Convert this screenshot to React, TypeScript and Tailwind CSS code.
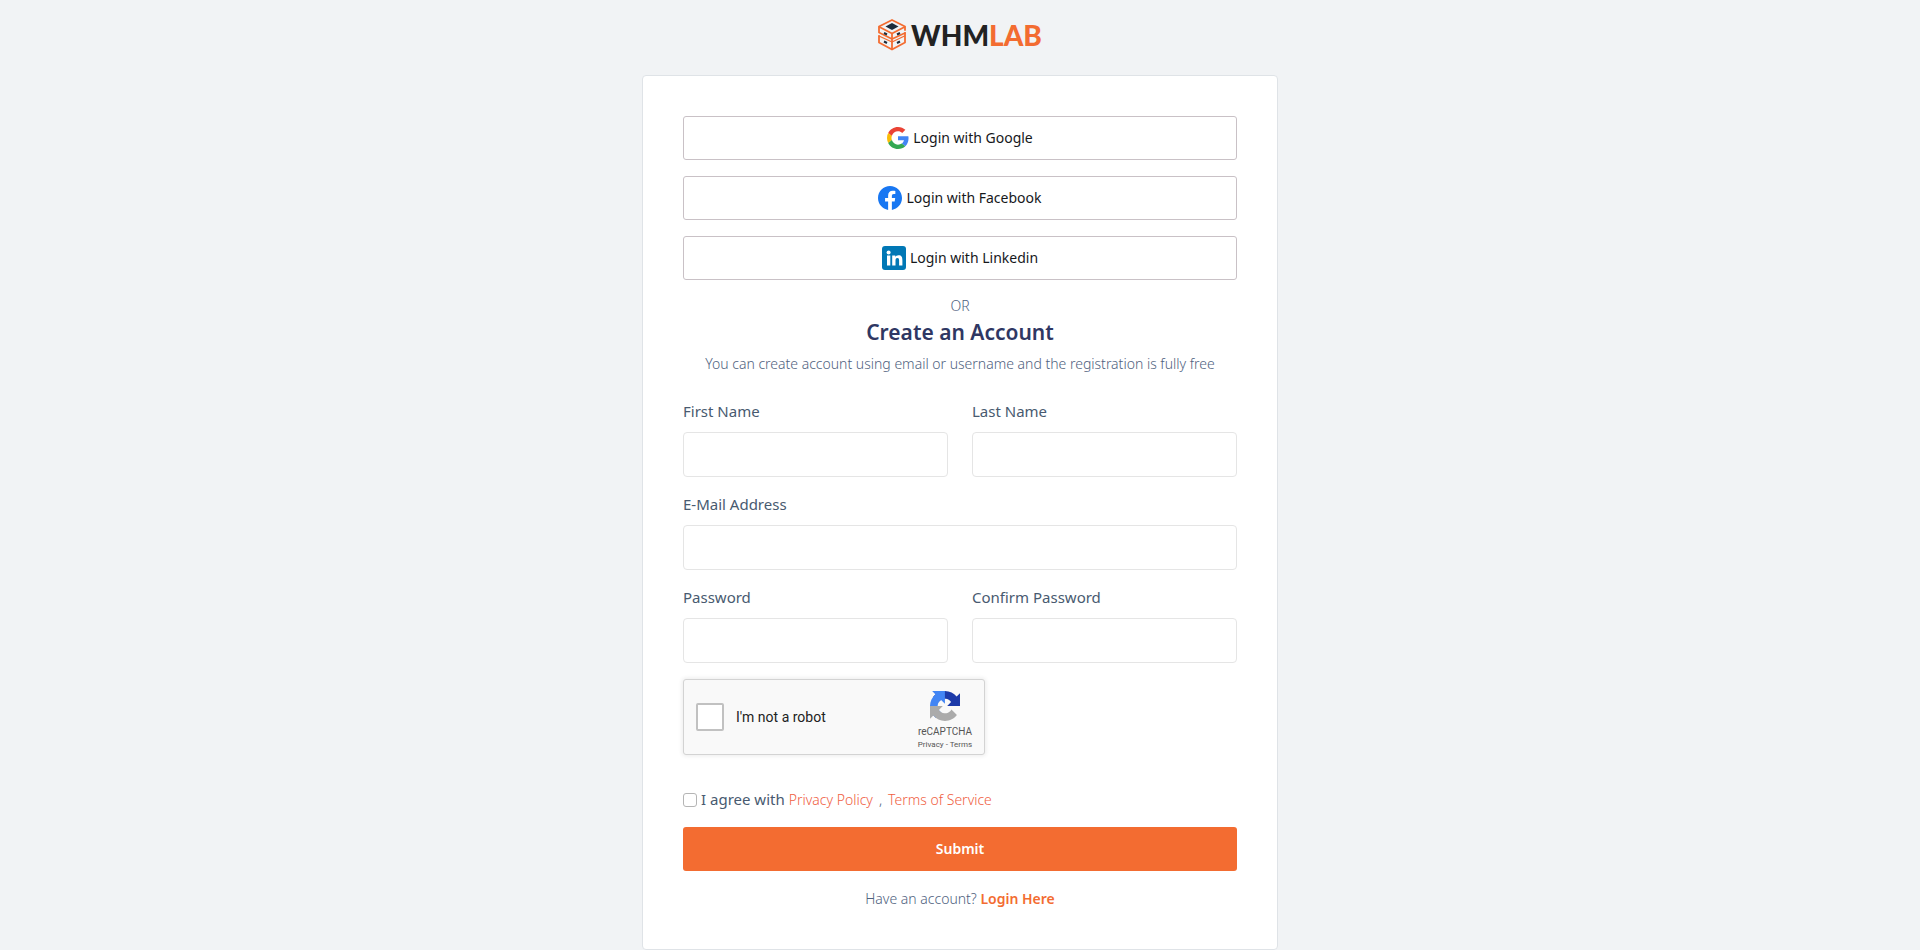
import React from 'react'

type SocialProps = { icon: React.ReactNode; label: string }
type FieldProps = { id: string; label: string; type?: string }

function Logo() {
  return (
    <a href="#" className="flex items-center justify-center gap-[5px]">
      <svg viewBox="0 0 56 64" className="w-7 h-8" fill="none" aria-hidden="true">
        <g stroke="#f36c31" strokeWidth="3.6" strokeLinejoin="round" strokeLinecap="round">
          <path d="M54 22 V15 L28 2 L2 15 V27 L28 40 L54 28" />
          <path d="M3 16 L28 29 L53 16" />
          <path d="M54 28 V47 L28 61 L2 47 V34" />
          <path d="M2 34 L28 46 L53 34" strokeWidth="2.6" />
          <path d="M28 30 V60" />
        </g>
        <path d="M28 8 L41 15 L28 22 L15 15 Z" fill="#1d2b3a" />
        <g stroke="#1d2b3a" strokeWidth="4">
          <path d="M12 28 L18 31 M12 45 L18 48 M38 31 L44 28 M38 48 L44 45" />
        </g>
      </svg>
      <span className="font-['Lato',sans-serif] text-[28px] leading-8 font-black text-[#222]">
        WHM<span className="text-[#f36c31]">LAB</span>
      </span>
    </a>
  )
}

function GoogleIcon() {
  return (
    <svg viewBox="0 0 48 48" className="size-[22px]" aria-hidden="true">
      <path fill="#EA4335" d="M24 9.5c3.54 0 6.71 1.22 9.21 3.6l6.85-6.85C35.9 2.38 30.47 0 24 0 14.62 0 6.51 5.38 2.56 13.22l7.98 6.19C12.43 13.72 17.74 9.5 24 9.5z" />
      <path fill="#4285F4" d="M46.98 24.55c0-1.57-.15-3.09-.38-4.55H24v9.02h12.94c-.58 2.96-2.26 5.48-4.78 7.18l7.73 6c4.51-4.18 7.09-10.36 7.09-17.65z" />
      <path fill="#FBBC05" d="M10.53 28.59c-.48-1.45-.76-2.99-.76-4.59s.27-3.14.76-4.59l-7.98-6.19C.92 16.46 0 20.12 0 24c0 3.88.92 7.54 2.56 10.78l7.97-6.19z" />
      <path fill="#34A853" d="M24 48c6.48 0 11.93-2.13 15.89-5.81l-7.73-6c-2.15 1.45-4.92 2.3-8.16 2.3-6.26 0-11.57-4.22-13.47-9.91l-7.98 6.19C6.51 42.62 14.62 48 24 48z" />
    </svg>
  )
}

function FacebookIcon() {
  return (
    <svg viewBox="0 0 24 24" className="size-6" aria-hidden="true">
      <path fill="#1877F2" d="M24 12.073c0-6.627-5.373-12-12-12s-12 5.373-12 12c0 5.99 4.388 10.954 10.125 11.854v-8.385H7.078v-3.47h3.047V9.43c0-3.007 1.792-4.669 4.533-4.669 1.312 0 2.686.235 2.686.235v2.953H15.83c-1.491 0-1.956.925-1.956 1.874v2.25h3.328l-.532 3.47h-2.796v8.385C19.612 23.027 24 18.062 24 12.073z" />
    </svg>
  )
}

function LinkedinIcon() {
  return (
    <svg viewBox="0 0 24 24" className="size-6" aria-hidden="true">
      <rect width="24" height="24" rx="3" fill="#0077b5" />
      <circle cx="6.6" cy="6.4" r="2" fill="#fff" />
      <path fill="#fff" d="M5 9.6h3.3v10H5zM10.2 9.6h3.1v1.4c.5-.9 1.6-1.7 3.2-1.7 3.2 0 3.9 2.1 3.9 4.9v5.4h-3.3v-4.8c0-1.3-.2-2.7-1.7-2.7-1.6 0-1.9 1.3-1.9 2.6v4.9h-3.3z" />
    </svg>
  )
}

function SocialButton({ icon, label }: SocialProps) {
  return (
    <button type="button" className="flex h-11 w-full items-center justify-center gap-1 rounded-[3px] border border-[#c9c1c6] text-sm text-[#16181b]">
      {icon}
      <span>{label}</span>
    </button>
  )
}

function Field({ id, label, type = 'text' }: FieldProps) {
  return (
    <div>
      <label htmlFor={id} className="mb-[10px] block text-[15px] leading-[22px] text-[#485a70]">{label}</label>
      <input id={id} type={type} className="block h-[45px] w-full rounded border border-[#e5e5e5] bg-white px-4 outline-none" />
    </div>
  )
}

function Recaptcha() {
  return (
    <div className="mt-4 flex h-[76px] w-[302px] items-center rounded-[3px] border border-[#d3d3d3] bg-[#f9f9f9] pl-3 pr-[7px] font-['Roboto',sans-serif] shadow-[0_0_4px_1px_rgba(0,0,0,0.08)]">
      <input id="robot" type="checkbox" className="size-7 appearance-none rounded-xs border-2 border-[#c1c1c1] bg-white" />
      <label htmlFor="robot" className="ml-3 flex-1 text-sm text-[#222]">I'm not a robot</label>
      <div className="flex w-16 flex-col items-center pt-2 text-[#555]">
        <svg viewBox="0 0 64 64" className="mb-1 size-[30px]" aria-hidden="true">
          <path fill="#1c3aa9" d="M64 31.955l-.033-1.37V4.687l-7.16 7.16C50.948 4.674 42.033.093 32.05.093c-10.4 0-19.622 4.96-25.458 12.64l11.736 11.86a15.55 15.55 0 0 1 4.754-5.334c2.05-1.6 4.952-2.906 8.968-2.906.485 0 .86.057 1.135.163 4.976.393 9.288 3.14 11.828 7.124l-8.307 8.307L64 31.953" />
          <path fill="#4285f4" d="M31.862.094l-1.37.033H4.594l7.16 7.16C4.58 13.147 0 22.06 0 32.046c0 10.4 4.96 19.622 12.64 25.458L24.5 45.768a15.55 15.55 0 0 1-5.334-4.754c-1.6-2.05-2.906-4.952-2.906-8.968 0-.485.057-.86.163-1.135.393-4.976 3.14-9.288 7.124-11.828l8.307 8.307L31.86.095" />
          <path fill="#ababab" d="M.001 32.045l.033 1.37v25.898l7.16-7.16c5.86 7.173 14.774 11.754 24.76 11.754 10.4 0 19.622-4.96 25.458-12.64l-11.736-11.86a15.55 15.55 0 0 1-4.754 5.334c-2.05 1.6-4.952 2.906-8.968 2.906-.485 0-.86-.057-1.135-.163-4.976-.393-9.288-3.14-11.828-7.124l8.307-8.307c-10.522.04-22.4.066-27.295-.005" />
        </svg>
        <span className="text-[10px] leading-[14px]">reCAPTCHA</span>
        <div className="text-[8px] leading-3">
          <a href="#">Privacy</a> - <a href="#">Terms</a>
        </div>
      </div>
    </div>
  )
}

export default function App() {
  return (
    <div className="min-h-screen bg-[#f1f3f5] pt-[19px] font-['Noto_Sans','Open_Sans',sans-serif] text-[#4f6280]">
      <Logo />
      <main className="mx-auto mt-6 max-w-[636px] rounded border border-[#dfe3e7] bg-white px-10 pt-10 pb-[38px]">
        <div className="flex flex-col gap-4">
          <SocialButton icon={<GoogleIcon />} label="Login with Google" />
          <SocialButton icon={<FacebookIcon />} label="Login with Facebook" />
          <SocialButton icon={<LinkedinIcon />} label="Login with Linkedin" />
        </div>
        <div className="mt-4 text-center text-sm font-light">
          <p className="leading-5">OR</p>
          <h1 className="text-[21px] leading-8 font-semibold text-[#2f3763]">Create an Account</h1>
          <p className="mt-1 leading-6">You can create account using email or username and the registration is fully free</p>
        </div>

        <form onSubmit={(e) => e.preventDefault()} className="mt-6">
          <div className="grid grid-cols-1 gap-x-6 gap-y-4 sm:grid-cols-2">
            <Field id="firstName" label="First Name" />
            <Field id="lastName" label="Last Name" />
            <div className="sm:col-span-2">
              <Field id="email" label="E-Mail Address" type="email" />
            </div>
            <Field id="password" label="Password" type="password" />
            <Field id="confirmPassword" label="Confirm Password" type="password" />
          </div>

          <Recaptcha />

          <div className="mt-8 flex items-center gap-1 text-sm font-light leading-6">
            <input id="agree" type="checkbox" className="size-3.5 appearance-none rounded-[3px] border border-[#b5b5b5] bg-white" />
            <div className="flex items-baseline gap-1">
              <label htmlFor="agree" className="text-[15px] font-normal text-[#485a70]">I agree with</label>
              <a href="#" className="text-[#f0603f]">Privacy Policy</a>
              <span className="px-0.5">,</span>
              <a href="#" className="text-[#f0603f]">Terms of Service</a>
            </div>
          </div>

          <button type="submit" className="mt-[15px] h-11 w-full rounded-[3px] bg-[#f36c31] text-sm font-semibold text-white">Submit</button>
        </form>

        <p className="mt-4 text-center text-sm font-light leading-6">
          Have an account? <a href="#" className="font-semibold text-[#f36c31]">Login Here</a>
        </p>
      </main>
    </div>
  )
}
